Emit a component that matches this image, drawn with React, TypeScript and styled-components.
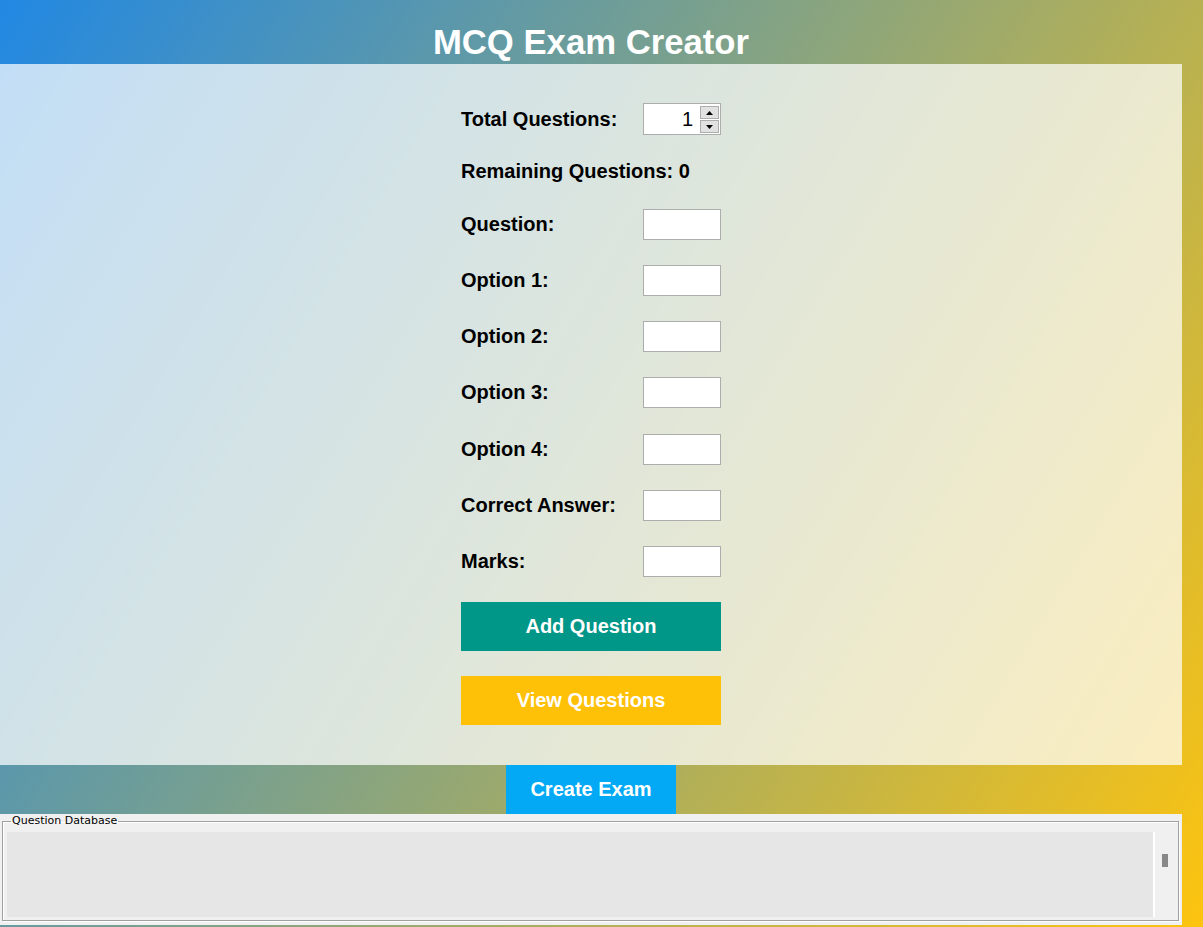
import React from "react";
import styled, { createGlobalStyle } from "styled-components";

const Global = createGlobalStyle`
  html, body { margin: 0; padding: 0; }
  body { font-family: "Liberation Sans", Arial, sans-serif; }
  * { box-sizing: border-box; }
`;

const Page = styled.div`
  width: 1203px;
  height: 927px;
  overflow: hidden;
  background: linear-gradient(121deg, #2188e3 0%, #fdc40f 100%);
  display: flex;
  flex-direction: column;
`;

const Column = styled.div`
  width: 1182px;
  display: flex;
  flex-direction: column;
  align-items: center;
`;

const Header = styled.header`
  width: 100%;
  height: 64px;
  padding-top: 23px;
  display: flex;
  justify-content: center;
  align-items: flex-start;
`;

const Title = styled.h1`
  margin: 0;
  font-size: 34.7px;
  line-height: normal;
  font-weight: bold;
  color: #ffffff;
`;

const Panel = styled.main`
  width: 100%;
  height: 701px;
  background: rgba(255, 255, 255, 0.72);
  display: flex;
  justify-content: center;
  padding-top: 39px;
`;

const Form = styled.div`
  width: 260px;
  display: flex;
  flex-direction: column;
  gap: 25px;
`;

const Row = styled.div<{ $h?: number; $nudge?: number }>`
  display: grid;
  grid-template-columns: 182px 78px;
  align-items: center;
  height: ${(p) => p.$h ?? 31}px;
  margin-top: ${(p) => p.$nudge ?? 0}px;
`;

const Label = styled.span`
  font-size: 20px;
  font-weight: bold;
  color: #000;
  white-space: nowrap;
`;

const Entry = styled.input`
  width: 78px;
  height: 31px;
  border: 1px solid #adadad;
  background: #fff;
  margin: 0;
  padding: 0 4px;
  font-family: "Liberation Sans", Arial, sans-serif;
  font-size: 20px;
  outline: none;
`;

const Spin = styled.div`
  width: 78px;
  height: 32px;
  border: 1px solid #adadad;
  background: #fff;
  display: flex;
  align-items: stretch;
  padding: 2px 1px 1px 0;
`;

const SpinValue = styled.span`
  flex: 1;
  text-align: right;
  padding-right: 7px;
  font-size: 20px;
  line-height: 27px;
  color: #000;
`;

const SpinButtons = styled.div`
  width: 19px;
  display: flex;
  flex-direction: column;
  gap: 1px;
`;

const SpinBtn = styled.div`
  flex: 1;
  background: #e1e1e1;
  border: 1px solid #adadad;
  display: flex;
  align-items: center;
  justify-content: center;
`;

const Button = styled.button<{ $bg: string; $w?: number; $nudge?: number }>`
  width: ${(p) => p.$w ?? 260}px;
  height: 49px;
  border: none;
  margin: ${(p) => p.$nudge ?? 0}px 0 0 0;
  padding: 0;
  background: ${(p) => p.$bg};
  color: #fff;
  font-family: "Liberation Sans", Arial, sans-serif;
  font-size: 20px;
  font-weight: bold;
  cursor: pointer;
`;

const Bottom = styled.section`
  width: 1182px;
  height: 111px;
  background: #f0f0f0;
  padding: 0 3px 4px 2px;
`;

const Group = styled.fieldset`
  margin: 0;
  padding: 0;
  height: 107px;
  border: 1px solid #a0a0a0;
  box-shadow: 1px 1px 0 #ffffff, inset 1px 1px 0 #ffffff;
  display: flex;
  min-width: 0;
`;

const Legend = styled.legend`
  margin-left: 8px;
  padding: 0 1px;
  font-family: "DejaVu Sans", Tahoma, sans-serif;
  font-size: 11px;
  line-height: 14px;
  color: #000;
`;

const ListWrap = styled.div`
  display: flex;
  width: 100%;
  margin: 4px 0 3px 4px;
`;

const ListBox = styled.div`
  flex: 1;
  height: 85px;
  background: #e6e6e6;
  border-right: 2px solid #ffffff;
`;

const ScrollTrack = styled.div`
  width: 23px;
  padding: 22px 0 0 7px;
`;

const Thumb = styled.div`
  width: 6px;
  height: 13px;
  background: #888888;
`;

const Arrow = ({ up }: { up?: boolean }) => (
  <svg width="7" height="4" viewBox="0 0 7 4">
    <polygon points={up ? "3.5,0 7,4 0,4" : "0,0 7,0 3.5,4"} fill="#000" />
  </svg>
);

const fields = ["Question:", "Option 1:", "Option 2:", "Option 3:", "Option 4:", "Correct Answer:", "Marks:"];

export default function App() {
  return (
    <>
      <Global />
      <Page>
        <Column>
          <Header>
            <Title>MCQ Exam Creator</Title>
          </Header>
          <Panel>
            <Form>
              <Row>
                <Label>Total Questions:</Label>
                <Spin>
                  <SpinValue>1</SpinValue>
                  <SpinButtons>
                    <SpinBtn><Arrow up /></SpinBtn>
                    <SpinBtn><Arrow /></SpinBtn>
                  </SpinButtons>
                </Spin>
              </Row>
              <Row $h={25}>
                <Label>Remaining Questions: 0</Label>
              </Row>
              {fields.map((f) => (
                <Row key={f} $nudge={f === "Option 4:" ? 1 : 0}>
                  <Label>{f}</Label>
                  <Entry />
                </Row>
              ))}
              <Button $bg="#009688">Add Question</Button>
              <Button $bg="#ffc107">View Questions</Button>
            </Form>
          </Panel>
          <Button $bg="#03a9f4" $w={170}>Create Exam</Button>
          <Bottom>
            <Group>
              <Legend>Question Database</Legend>
              <ListWrap>
                <ListBox />
                <ScrollTrack>
                  <Thumb />
                </ScrollTrack>
              </ListWrap>
            </Group>
          </Bottom>
        </Column>
      </Page>
    </>
  );
}
